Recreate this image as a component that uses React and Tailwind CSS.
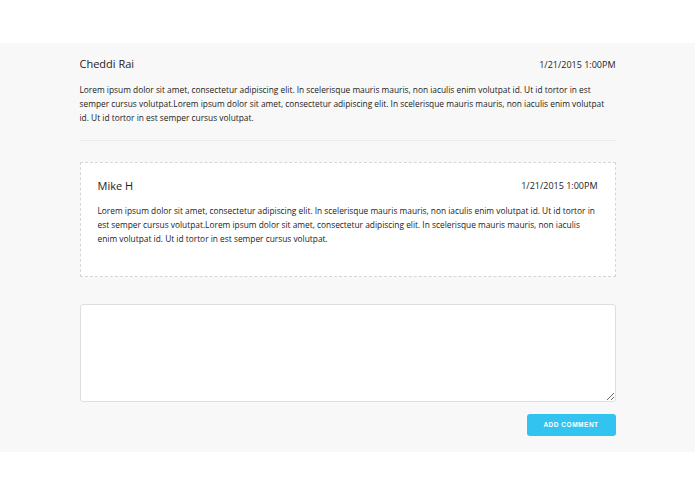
import React, { useState } from "react";

const LOREM =
  "Lorem ipsum dolor sit amet, consectetur adipiscing elit. In scelerisque mauris mauris, non iaculis enim volutpat id. Ut id tortor in est semper cursus volutpat.Lorem ipsum dolor sit amet, consectetur adipiscing elit. In scelerisque mauris mauris, non iaculis enim volutpat id. Ut id tortor in est semper cursus volutpat.";

const CommentHead = ({ name, date }) => (
  <div className="flex items-center justify-between">
    <span className="text-[11px] text-[#222]">{name}</span>
    <span className="text-[9px] text-[#222]">{date}</span>
  </div>
);

export default function App() {
  const [text, setText] = useState("");

  return (
    <div className="min-h-[494px] bg-white font-['Open_Sans',sans-serif]">
      <div className="h-[43px]" />
      <div className="bg-[#f8f8f8] pt-[13px] pb-[16px]">
        <div className="mx-auto w-[536px]">
          <div className="border-b border-[#ebebeb] pb-[15px]">
            <CommentHead name="Cheddi Rai" date="1/21/2015 1:00PM" />
            <p className="mt-[10px] text-[8.35px] leading-[14px] text-[#222]">
              {LOREM}
            </p>
          </div>

          <div className="mt-[21px] border border-dashed border-[#d6d6d6] bg-white px-[17px] pt-[15px] pb-[30px]">
            <CommentHead name="Mike H" date="1/21/2015 1:00PM" />
            <p className="mt-[10px] text-[8.35px] leading-[14px] text-[#222]">
              {LOREM}
            </p>
          </div>

          <textarea
            value={text}
            onChange={(e) => setText(e.target.value)}
            className="mt-[27px] block h-[98px] w-full rounded-[3px] border border-[#dedede] bg-white p-2 text-[9px] outline-none"
          />

          <div className="mt-[12px] flex justify-end">
            <button
              type="button"
              className="h-[22px] w-[89px] rounded-[3px] bg-[#33c3f0] text-[6.5px] font-bold uppercase tracking-[0.08em] text-white font-['Liberation_Sans',sans-serif]"
            >
              Add Comment
            </button>
          </div>
        </div>
      </div>
    </div>
  );
}
